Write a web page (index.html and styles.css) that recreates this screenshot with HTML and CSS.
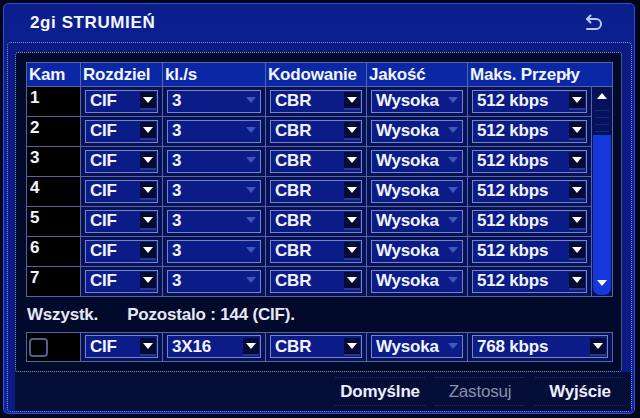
FILE: index.html
```html
<!DOCTYPE html>
<html lang="pl">
<head>
<meta charset="utf-8">
<title>2gi STRUMIEŃ</title>
<link rel="stylesheet" href="styles.css">
</head>
<body>
<div class="window">
  <div class="titlebar">
    <span class="title">2gi STRUMIEŃ</span>
    <svg class="back" width="20" height="20" viewBox="0 0 20 20"><path d="M6.5 2.5 L3 6 L6.5 9.5" /><path d="M3 6 H12 A5 5 0 0 1 12 16 H3" /></svg>
  </div>
  <div class="frame">
    <div class="panel">
      <div class="tbl main">
        <div class="h">Kam</div><div class="h">Rozdziel</div><div class="h">kl./s</div><div class="h">Kodowanie</div><div class="h">Jakość</div><div class="h wide">Maks. Przepły</div>
        <div class="scroll">
          <div class="up"><i class="tri-up"></i></div>
          <div class="thumb"></div>
          <div class="track"><i class="tri-down"></i></div>
        </div>

        <div class="cam">1</div><div class="c"><div class="dd">CIF<i class="arr"></i></div></div><div class="c"><div class="dd">3<i class="arr dim"></i></div></div><div class="c"><div class="dd">CBR<i class="arr"></i></div></div><div class="c"><div class="dd">Wysoka<i class="arr dim"></i></div></div><div class="c"><div class="dd">512 kbps<i class="arr"></i></div></div>
        <div class="cam">2</div><div class="c"><div class="dd">CIF<i class="arr"></i></div></div><div class="c"><div class="dd">3<i class="arr dim"></i></div></div><div class="c"><div class="dd">CBR<i class="arr"></i></div></div><div class="c"><div class="dd">Wysoka<i class="arr dim"></i></div></div><div class="c"><div class="dd">512 kbps<i class="arr"></i></div></div>
        <div class="cam">3</div><div class="c"><div class="dd">CIF<i class="arr"></i></div></div><div class="c"><div class="dd">3<i class="arr dim"></i></div></div><div class="c"><div class="dd">CBR<i class="arr"></i></div></div><div class="c"><div class="dd">Wysoka<i class="arr dim"></i></div></div><div class="c"><div class="dd">512 kbps<i class="arr"></i></div></div>
        <div class="cam">4</div><div class="c"><div class="dd">CIF<i class="arr"></i></div></div><div class="c"><div class="dd">3<i class="arr dim"></i></div></div><div class="c"><div class="dd">CBR<i class="arr"></i></div></div><div class="c"><div class="dd">Wysoka<i class="arr dim"></i></div></div><div class="c"><div class="dd">512 kbps<i class="arr"></i></div></div>
        <div class="cam">5</div><div class="c"><div class="dd">CIF<i class="arr"></i></div></div><div class="c"><div class="dd">3<i class="arr dim"></i></div></div><div class="c"><div class="dd">CBR<i class="arr"></i></div></div><div class="c"><div class="dd">Wysoka<i class="arr dim"></i></div></div><div class="c"><div class="dd">512 kbps<i class="arr"></i></div></div>
        <div class="cam">6</div><div class="c"><div class="dd">CIF<i class="arr"></i></div></div><div class="c"><div class="dd">3<i class="arr dim"></i></div></div><div class="c"><div class="dd">CBR<i class="arr"></i></div></div><div class="c"><div class="dd">Wysoka<i class="arr dim"></i></div></div><div class="c"><div class="dd">512 kbps<i class="arr"></i></div></div>
        <div class="cam">7</div><div class="c"><div class="dd">CIF<i class="arr"></i></div></div><div class="c"><div class="dd">3<i class="arr dim"></i></div></div><div class="c"><div class="dd">CBR<i class="arr"></i></div></div><div class="c"><div class="dd">Wysoka<i class="arr dim"></i></div></div><div class="c"><div class="dd">512 kbps<i class="arr"></i></div></div>
      </div>

      <div class="info"><span class="all-label">Wszystk.</span><span class="left">Pozostalo : 144 (CIF).</span></div>

      <div class="tbl allrow">
        <div class="cam chk-cell"><i class="chk"></i></div>
        <div class="c"><div class="dd">CIF<i class="arr"></i></div></div>
        <div class="c"><div class="dd">3X16<i class="arr"></i></div></div>
        <div class="c"><div class="dd">CBR<i class="arr"></i></div></div>
        <div class="c"><div class="dd">Wysoka<i class="arr dim"></i></div></div>
        <div class="c"><div class="dd">768 kbps<i class="arr"></i></div></div>
      </div>
    </div>
    <div class="buttons">
      <div class="btn">Domyślne</div>
      <div class="btn off">Zastosuj</div>
      <div class="btn">Wyjście</div>
    </div>
  </div>
</div>
</body>
</html>
```
FILE: styles.css
```css
html, body {
  margin: 0;
  padding: 0;
}
body {
  width: 640px;
  height: 418px;
  overflow: hidden;
  background: #01051a;
  font-family: "Liberation Sans", Arial, sans-serif;
  font-weight: bold;
  font-size: 17px;
  letter-spacing: -0.2px;
  color: #f2f4ff;
}
.window {
  margin: 3px;
  width: 632px;
  height: 411px;
  box-sizing: border-box;
  border: 1px solid #2e4ed6;
  border-radius: 5px;
  background: linear-gradient(#0b1e8c, #0e269e);
  display: flex;
  flex-direction: column;
}
.titlebar {
  height: 38px;
  flex: none;
  display: flex;
  align-items: center;
  justify-content: space-between;
  padding: 0 30px 0 26px;
}
.title {
  letter-spacing: 0.6px;
  color: #f4f6ff;
}
.back {
  fill: none;
  stroke: #b9c9ff;
  stroke-width: 2;
  stroke-linecap: round;
  stroke-linejoin: round;
}
.frame {
  flex: 1;
  margin: 0 2px 1px 3px;
  border: 1px dotted #8294dc;
  border-radius: 4px;
  background: #0a1b84;
  padding: 9px 9px 0 7px;
  display: flex;
  flex-direction: column;
}
.panel {
  width: 607px;
  height: 320px;
  box-sizing: border-box;
  border: 1px dotted #8a9ad8;
  border-radius: 3px;
  background: #020a2c;
  padding: 9px 8px 0 10px;
}
.tbl {
  display: grid;
  gap: 1px;
  padding: 1px;
  background: #5565a2;
}
.main {
  grid-template-columns: 53px 81px 102px 100px 100px 123px 20px;
  grid-template-rows: 23px repeat(7, 29px);
}
.allrow {
  grid-template-columns: 53px 81px 102px 100px 100px 144px;
  grid-template-rows: 28px;
}
.h {
  background: #0a28a6;
  padding-left: 2px;
  line-height: 24px;
  white-space: nowrap;
}
.h.wide {
  grid-column: 6 / span 2;
}
.cam {
  background: #000;
  padding: 3px 0 0 3px;
  line-height: 16px;
}
.c {
  background: #061158;
  display: flex;
  align-items: center;
  padding: 0 4px 1px 4px;
}
.dd {
  flex: 1;
  height: 23px;
  box-sizing: border-box;
  border: 1px solid #7585c0;
  background: #0b1c88;
  display: flex;
  align-items: center;
  padding: 0 1px 0 4px;
  white-space: nowrap;
}
.arr {
  margin-left: auto;
  width: 16px;
  height: 18px;
  box-sizing: border-box;
  background: #030b35;
  border-bottom: 2px solid #26368c;
  display: flex;
  align-items: center;
  justify-content: center;
}
.arr::before {
  content: "";
  border-left: 5px solid transparent;
  border-right: 5px solid transparent;
  border-top: 6px solid #ffffff;
}
.arr.dim {
  background: transparent;
  border-bottom-color: transparent;
}
.arr.dim::before {
  border-top-color: #3d58b8;
}
.scroll {
  grid-column: 7;
  grid-row: 2 / span 7;
  background: #061158;
  display: flex;
  flex-direction: column;
  padding: 1px;
}
.up {
  height: 16px;
  display: flex;
  align-items: center;
  justify-content: center;
}
.tri-up {
  border-left: 5px solid transparent;
  border-right: 5px solid transparent;
  border-bottom: 6px solid #ffffff;
}
.thumb {
  height: 31px;
  margin: 0 2px;
  background: repeating-linear-gradient(#07125c 0 6px, #18297a 6px 7px);
}
.track {
  flex: 1;
  background: #1538dc;
  border-radius: 0 0 7px 7px;
  display: flex;
  align-items: flex-end;
  justify-content: center;
  padding-bottom: 9px;
}
.tri-down {
  border-left: 5px solid transparent;
  border-right: 5px solid transparent;
  border-top: 6px solid #ffffff;
}
.info {
  height: 35px;
  display: flex;
  align-items: center;
  padding-left: 1px;
  color: #e6e8f4;
}
.info .left {
  margin-left: 29px;
}
.chk-cell {
  padding: 0 0 0 2px;
  display: flex;
  align-items: center;
}
.chk {
  width: 19px;
  height: 19px;
  box-sizing: border-box;
  border: 2px solid #4f5f92;
  border-radius: 4px;
}
.buttons {
  flex: 1;
  margin: 0 -9px 0 0;
  background: #050e36;
  display: flex;
  justify-content: flex-end;
  align-items: center;
  gap: 10px;
  padding: 0 6px 0 0;
}
.btn {
  width: 90px;
  height: 27px;
  line-height: 27px;
  text-align: center;
  border-top: 1px dotted #1c2c66;
  border-bottom: 1px dotted #1c2c66;
  color: #eef0ff;
}
.btn.off {
  color: #8a90ac;
  font-weight: normal;
}
```
